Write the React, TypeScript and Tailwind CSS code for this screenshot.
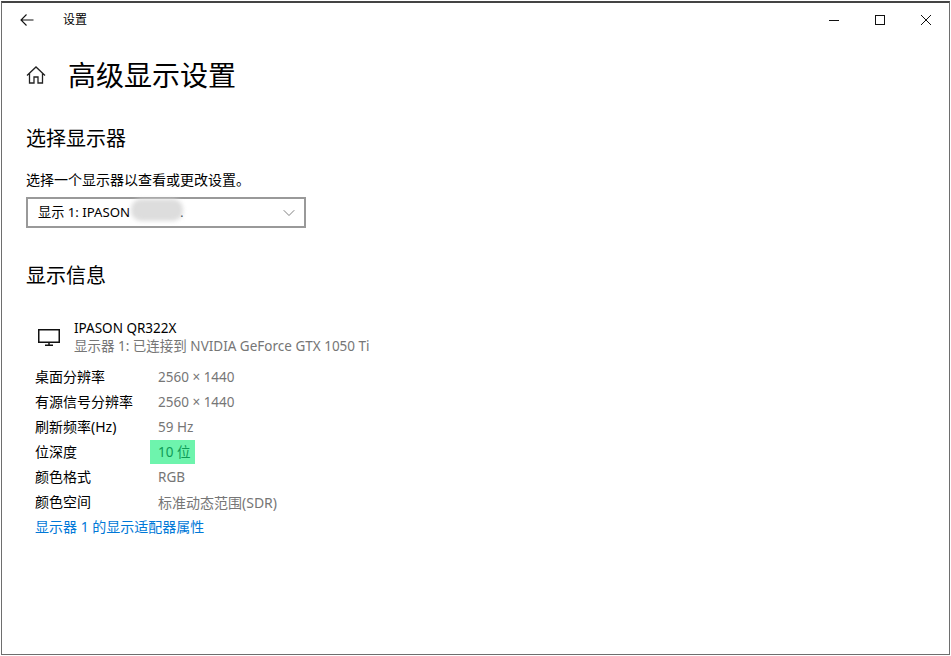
import { ChevronDown } from "lucide-react";

const font = "font-['Noto_Sans','Noto_Sans_CJK_SC',sans-serif]";

const rows = [
  { label: "桌面分辨率", value: "2560 × 1440", size: "text-[13.5px]" },
  { label: "有源信号分辨率", value: "2560 × 1440", size: "text-[13.5px]" },
  { label: "刷新频率(Hz)", value: "59 Hz", size: "text-[13.5px]" },
  { label: "位深度", value: "10 位", size: "text-[13.5px]", marked: true },
  { label: "颜色格式", value: "RGB", size: "text-[13.5px]" },
  { label: "颜色空间", value: "标准动态范围(SDR)", size: "text-[14px]" },
];

function BackIcon() {
  return (
    <svg width="14" height="12" viewBox="0 0 14 12" fill="none" stroke="#111" strokeWidth="1.1">
      <path d="M1 6H13.5M6.5.5 1 6l5.5 5.5" />
    </svg>
  );
}

function HomeIcon() {
  return (
    <svg width="20" height="18" viewBox="0 0 20 18" fill="none" stroke="#222" strokeWidth="1.3">
      <path d="M1 9.5 10 1l9 8.5M3.5 7.5V17H8v-6h4v6h4.5V7.5" />
    </svg>
  );
}

function MonitorIcon() {
  return (
    <svg width="22" height="17" viewBox="0 0 22 17" fill="none" stroke="#111" strokeWidth="1.5">
      <path d="M.75.75h20.5v12.5H.75zM11 13.5v2.5M7 16.25h8" />
    </svg>
  );
}

export default function App() {
  return (
    <div className={`${font} h-[656px] w-[951px] overflow-hidden bg-white p-px text-black`}>
      <div className="flex h-full flex-col border border-t-2 border-[#6e6e6e] border-t-[#444]">
        {/* title bar */}
        <div className="flex h-[34px] shrink-0 items-center">
          <div className="ml-[18px] flex w-[14px]">
            <BackIcon />
          </div>
          <span className="ml-[29px] text-[12px]">设置</span>
          <div className="ml-auto flex items-center">
            <svg width="10" height="10" viewBox="0 0 10 10" className="mr-[36px]" shapeRendering="crispEdges">
              <path d="M0 5h10" stroke="#111" strokeWidth="1" />
            </svg>
            <svg width="10" height="10" viewBox="0 0 10 10" className="mr-[36px]" shapeRendering="crispEdges">
              <path d="M.5.5h9v9h-9z" fill="none" stroke="#111" strokeWidth="1" />
            </svg>
            <svg width="10" height="10" viewBox="0 0 10 10" className="mr-[18px]">
              <path d="M0 0l10 10M10 0 0 10" fill="none" stroke="#111" strokeWidth="1" />
            </svg>
          </div>
        </div>

        {/* page header */}
        <div className="mt-[12px] flex h-[52px] items-center">
          <div className="ml-[24px] flex w-[20px]">
            <HomeIcon />
          </div>
          <h1 className="ml-[22px] text-[28px] leading-none">高级显示设置</h1>
        </div>

        <div className="pl-[24px]">
          <h2 className="mt-[24px] text-[20px] leading-[28px]">选择显示器</h2>
          <p className="mt-[17px] text-[14px] leading-[20px]">选择一个显示器以查看或更改设置。</p>

          <div className="relative mt-[7px] flex h-[31px] w-[280px] items-center border-2 border-[#999] pl-[10px] pt-px text-[13.2px]">
            <span>显示 1: IPASON</span>
            <span className="ml-[50px]">.</span>
            <ChevronDown className="absolute right-[5px] size-[20px] text-[#555]" strokeWidth={0.9} />
            <div className="absolute left-[103px] top-0 h-[22px] w-[52px] rounded-[10px] bg-[#ddd] blur-[2px]" />
          </div>

          <h2 className="mt-[34px] text-[20px] leading-[28px]">显示信息</h2>
        </div>

        {/* display info */}
        <div className="mt-[29px] flex items-center pl-[36px]">
          <MonitorIcon />
          <div className="ml-[14px] text-[13.5px] leading-[18px]">
            <div>IPASON QR322X</div>
            <div className="text-[#767676]">显示器 1: 已连接到 NVIDIA GeForce GTX 1050 Ti</div>
          </div>
        </div>

        <div className="mt-[9px] pl-[33px] text-[14px]">
          {rows.map((r) => (
            <div key={r.label} className="flex h-[25px] items-center">
              <span className="w-[115px]">{r.label}</span>
              {r.marked ? (
                <span className={`flex h-[24px] w-[45px] items-center self-end bg-[#6ef4ad] pl-[8px] text-[#0f9c58] ${r.size}`}>{r.value}</span>
              ) : (
                <span className={`pl-[8px] pt-px text-[#767676] ${r.size}`}>{r.value}</span>
              )}
            </div>
          ))}
          <div className="flex h-[25px] items-center text-[#0078d7]">显示器 1 的显示适配器属性</div>
        </div>
      </div>
    </div>
  );
}
